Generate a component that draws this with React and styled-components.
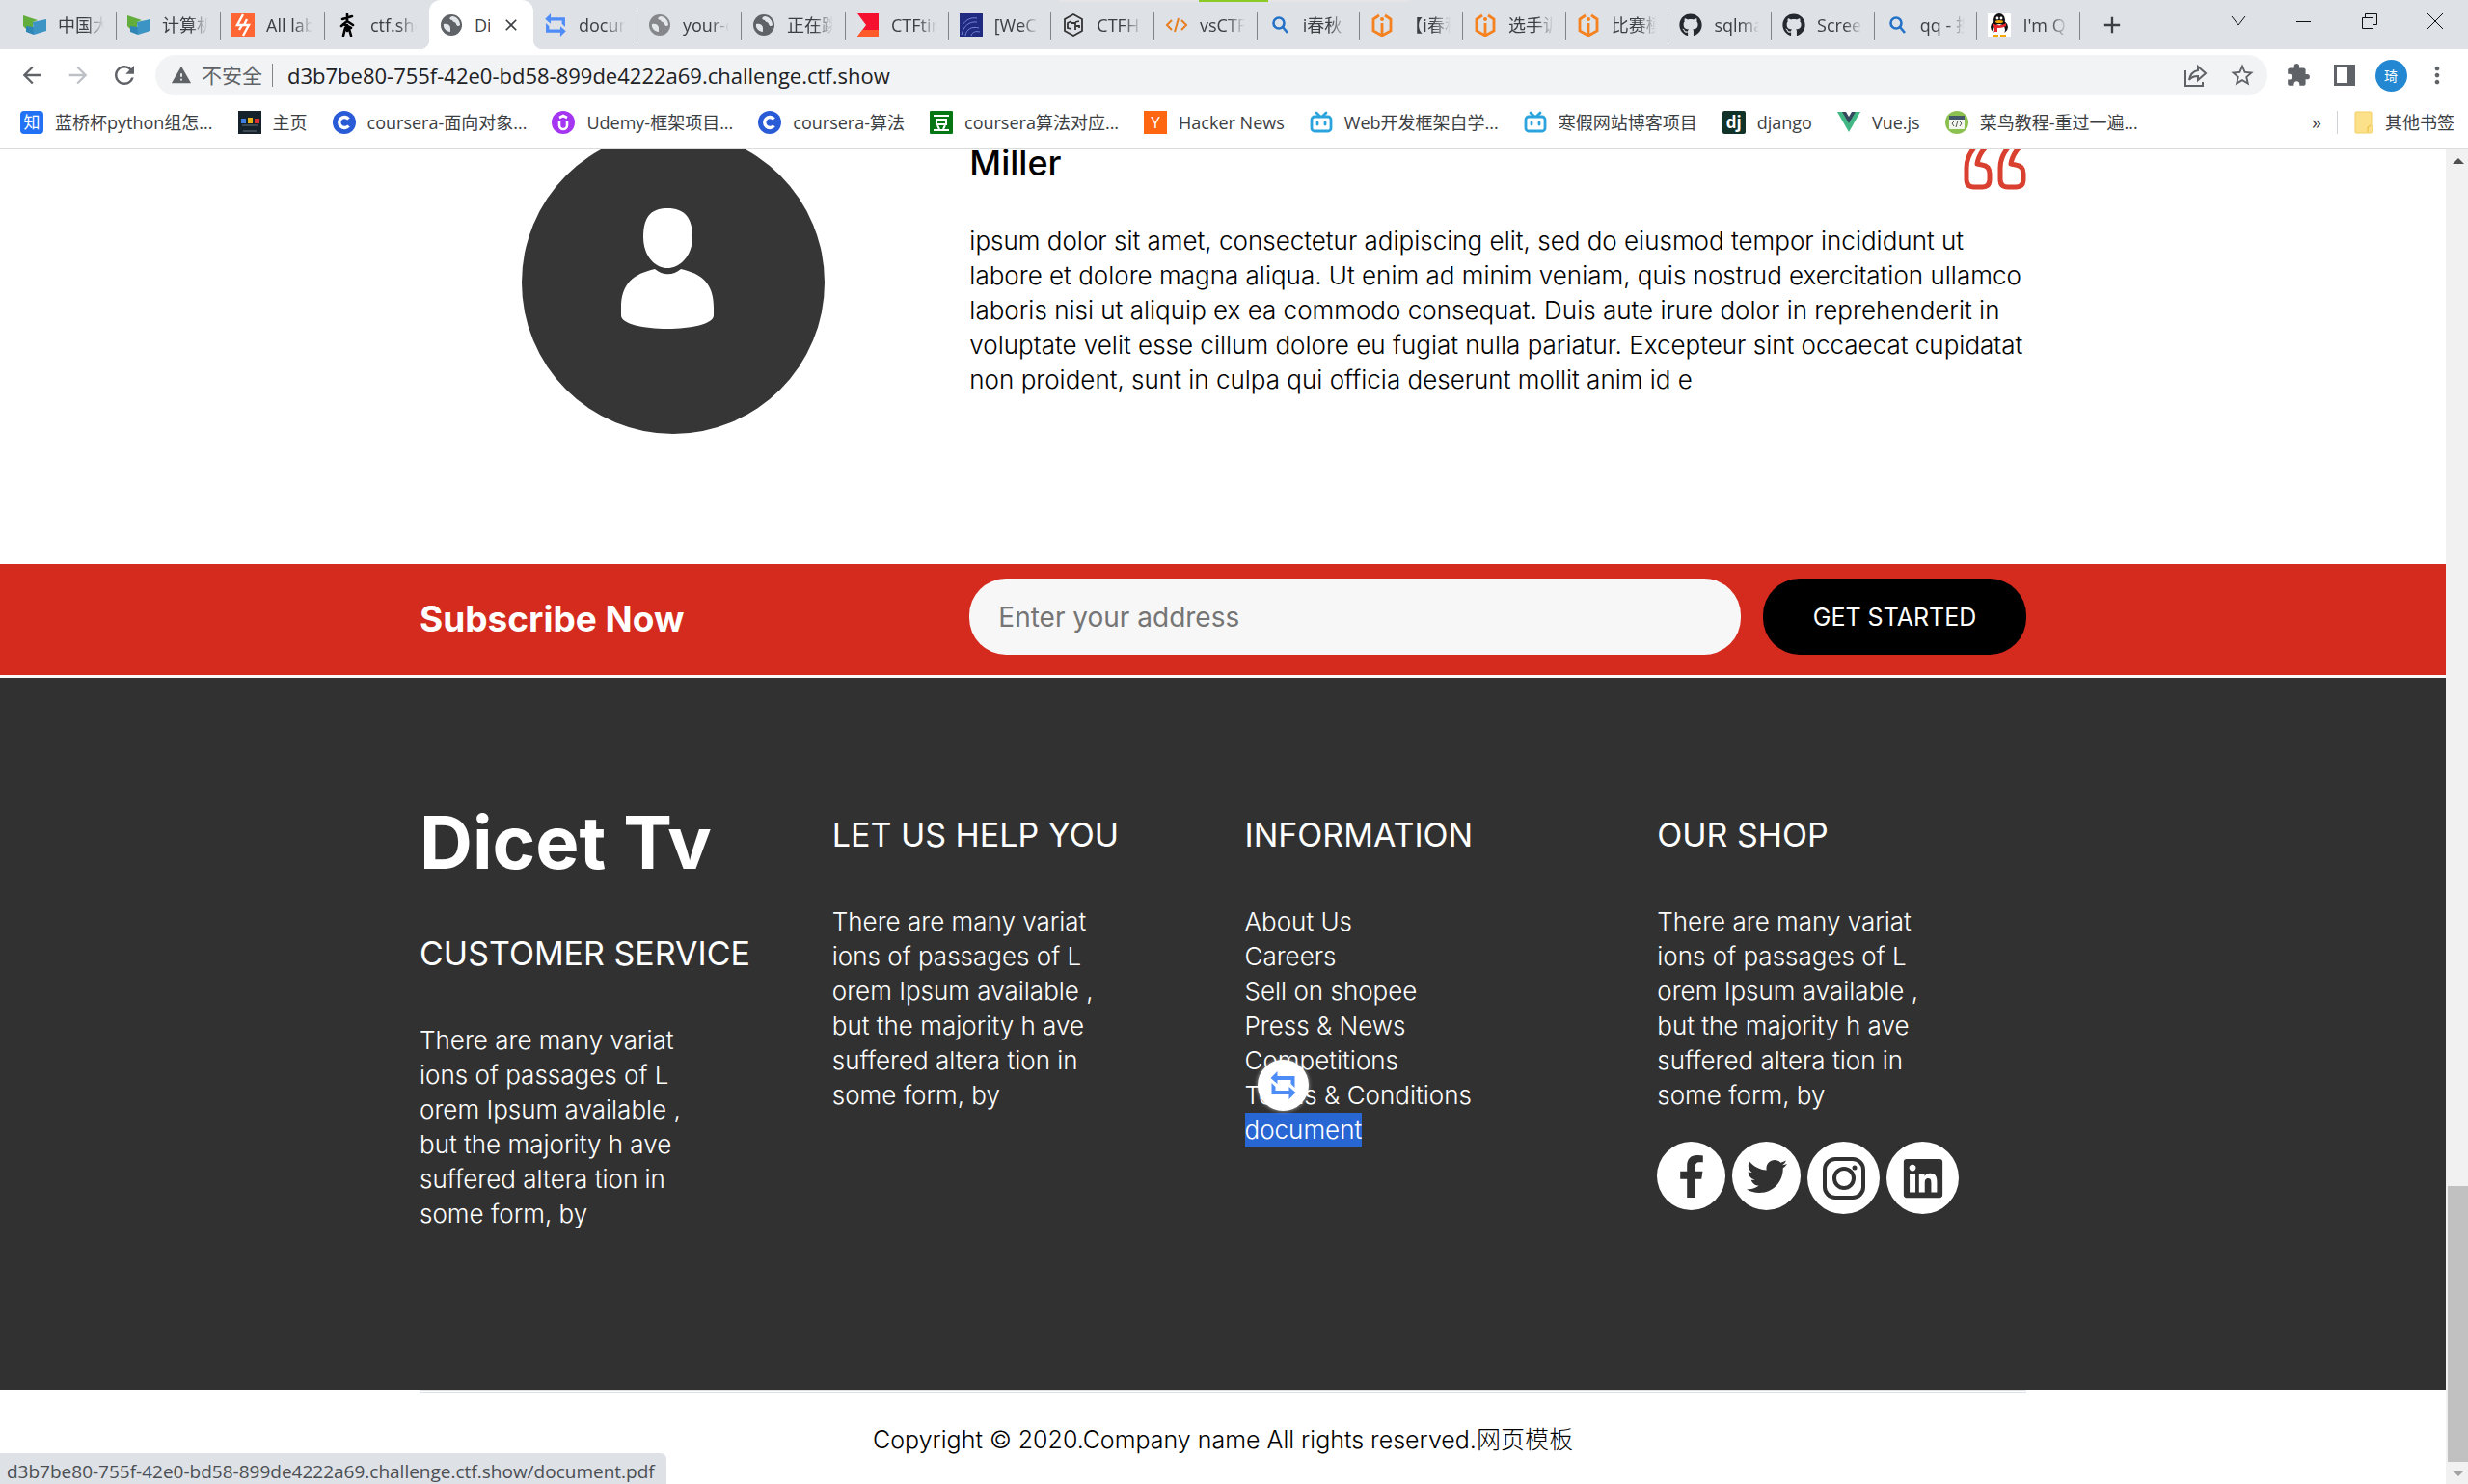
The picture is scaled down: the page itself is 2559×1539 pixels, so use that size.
import React from "react";
import styled, { createGlobalStyle, css } from "styled-components";
import {
  MdArrowBack,
  MdArrowForward,
  MdRefresh,
  MdWarning,
  MdStarBorder,
  MdExtension,
  MdMoreVert,
  MdAdd,
  MdClose,
} from "react-icons/md";
import { FaGithub, FaFacebookF, FaTwitter, FaLinkedin } from "react-icons/fa";

const uiFont = `"Open Sans", "Noto Sans CJK SC", sans-serif`;
const siteFont = `Inter, "Noto Sans CJK SC", sans-serif`;

const GlobalStyle = createGlobalStyle`
  *, *::before, *::after { box-sizing: border-box; }
  body { margin: 0; background: #fff; }
  h2, h3, p, ul { margin: 0; padding: 0; }
  ul { list-style: none; }
  a { color: inherit; text-decoration: none; }
  button { border: 0; padding: 0; background: none; font: inherit; color: inherit; }
  svg { display: block; flex: none; }
`;

/* ---------- browser frame ---------- */

const Browser = styled.div`
  display: flex;
  flex-direction: column;
  height: 100vh;
  overflow: hidden;
  font-family: ${uiFont};
  color: #3c4043;
`;

const TabStrip = styled.header`
  position: relative;
  display: flex;
  height: 51px;
  flex: none;
  padding-left: 13px;
  background: #dee1e6;
`;

const DragHandle = styled.div`
  position: absolute;
  top: 0;
  left: 50%;
  width: 363px;
  height: 2px;
  margin-left: -182px;
  background: linear-gradient(90deg, #e5e5e7 145px, #8ac926 145px 217px, #e5e5e7 217px);
`;

const TabList = styled.nav`
  display: flex;
  flex: 1;
  min-width: 0;
`;

const TabButton = styled.button`
  position: relative;
  display: flex;
  align-items: center;
  flex: 1 1 0;
  min-width: 0;
  gap: 12px;
  padding: 0 13px 0 11px;
  font-size: 18px;
  line-height: 24px;
  text-align: left;
  color: #3c4043;

  &:nth-child(-n + 8) {
    flex: 0 0 108px;
  }

  &::after {
    content: "";
    position: absolute;
    right: 0;
    top: 12px;
    width: 1px;
    height: 29px;
    background: ${(p) => (p.$bare ? "transparent" : "#808387")};
  }

  ${(p) =>
    p.$active &&
    css`
      background: #fff;
      border-radius: 12px 12px 0 0;

      &::before {
        content: "";
        position: absolute;
        left: -9px;
        right: -9px;
        bottom: 0;
        height: 9px;
        background:
          radial-gradient(circle at 0 0, transparent 9px, #fff 9px) left / 9px 9px no-repeat,
          radial-gradient(circle at 100% 0, transparent 9px, #fff 9px) right / 9px 9px no-repeat;
      }
    `}
`;

const TabLabel = styled.span`
  flex: 1;
  min-width: 0;
  overflow: hidden;
  white-space: nowrap;
  mask-image: ${(p) => (p.$solid ? "none" : "linear-gradient(90deg, #000 60%, transparent)")};
`;

const StripEnd = styled.div`
  display: flex;
  align-items: center;
  width: 402px;
  flex: none;
  color: #3c4043;
`;

const NewTab = styled.button`
  display: grid;
  place-items: center;
  width: 66px;
  height: 51px;
`;

const WindowControls = styled.div`
  display: flex;
  align-self: flex-start;
  margin-left: auto;
  color: #111;
`;

const WindowButton = styled.button`
  display: grid;
  place-items: center;
  width: 68px;
  height: 44px;
`;

const Toolbar = styled.div`
  display: flex;
  align-items: center;
  flex: none;
  height: 54px;
  padding: 0 8px 0 9px;
  color: #5f6368;
`;

const ToolButton = styled.button`
  display: grid;
  place-items: center;
  width: 48px;
  height: 42px;
  color: ${(p) => (p.$muted ? "#bdc1c6" : "#5f6368")};
`;

const AddressBar = styled.div`
  display: flex;
  align-items: center;
  flex: 1;
  height: 42px;
  margin: 0 8px;
  padding: 0 2px 0 16px;
  border-radius: 21px;
  background: #f1f3f4;
`;

const Security = styled.span`
  display: flex;
  align-items: center;
  gap: 10px;
  padding-right: 10px;
  border-right: 1px solid #80868b;
  font-size: 21px;
  line-height: 24px;
`;

const AddressInput = styled.input`
  flex: 1;
  min-width: 0;
  height: 36px;
  padding: 0 15px;
  border: 0;
  outline: 0;
  background: transparent;
  font-family: ${uiFont};
  font-size: 22px;
  color: #202124;
`;

const Profile = styled.span`
  display: grid;
  place-items: center;
  width: 33px;
  height: 33px;
  border-radius: 50%;
  background: #2388d1;
  color: #fff;
  font-size: 14px;
`;

const Bookmarks = styled.nav`
  display: flex;
  align-items: center;
  gap: 26px;
  flex: none;
  height: 50px;
  padding: 0 14px 4px 21px;
  border-bottom: 2px solid #dadcdc;
  font-size: 18px;
  line-height: 24px;
  white-space: nowrap;
`;

const Bookmark = styled.a`
  display: flex;
  align-items: center;
  gap: 12px;
`;

const Overflow = styled.button`
  margin-left: auto;
  margin-right: -10px;
  font-size: 20px;
  line-height: 24px;
`;

const OtherBookmarks = styled(Bookmark)`
  height: 24px;
  padding-left: 17px;
  border-left: 1px solid #d0d3d6;
`;

const Tile = styled.span`
  display: grid;
  place-items: center;
  width: 24px;
  height: 24px;
  flex: none;
  border-radius: ${(p) => p.$radius || "0"};
  background: ${(p) => p.$bg};
  color: #fff;
  font-size: 17px;
  font-weight: ${(p) => (p.$bold ? 700 : 400)};
  line-height: 24px;
`;

const Viewport = styled.div`
  display: flex;
  flex: 1;
  min-height: 0;
`;

const Page = styled.main`
  display: flex;
  flex-direction: column;
  justify-content: flex-end;
  flex: 1;
  min-width: 0;
  overflow: hidden;
  font-family: ${siteFont};
  color: #000;
`;

const Scrollbar = styled.div`
  display: flex;
  flex-direction: column;
  width: 23px;
  flex: none;
  padding-left: 2px;
  background: #f1f1f1;
`;

const ScrollArrow = styled.button`
  display: grid;
  place-items: center;
  height: 23px;
  flex: none;
  color: ${(p) => (p.$dim ? "#a3a3a3" : "#505050")};
`;

const ScrollSpace = styled.div`
  flex: 1052;
`;

const ScrollThumb = styled.div`
  flex: 286;
  background: #c1c1c1;
`;

const StatusBubble = styled.div`
  position: fixed;
  left: 0;
  bottom: 0;
  height: 32px;
  padding: 0 12px 0 7px;
  border-top-right-radius: 6px;
  background: #dee1e6;
  font-size: 19px;
  line-height: 38px;
  color: #4b4f54;
`;

/* ---------- web page ---------- */

const Container = styled.div`
  width: 100%;
  max-width: 1710px;
  margin: 0 auto;
  padding: 0 22px;
`;

const SplitRow = styled(Container)`
  display: grid;
  grid-template-columns: 525fr 1095fr;
  column-gap: 45px;
`;

const Testimonial = styled.section`
  flex: none;
  padding-bottom: 135px;
`;

const Portrait = styled.div`
  display: flex;
  justify-content: center;
`;

const Quote = styled.div`
  padding-top: 11px;
`;

const QuoteHead = styled.div`
  display: flex;
  justify-content: space-between;
  height: 50px;
  margin-bottom: 35px;
`;

const Name = styled.h3`
  font-size: 36px;
  font-weight: 500;
  line-height: 44px;
`;

const Copy = styled.p`
  font-size: 26px;
  font-weight: 300;
  line-height: 36px;
  white-space: pre-line;
`;

const Subscribe = styled.section`
  flex: none;
  padding: 15px 0 21px;
  border-bottom: 3px solid #f8f9fa;
  background: #d52b1e;
  background-clip: padding-box;
`;

const SubscribeTitle = styled.h3`
  padding-top: 20px;
  font-size: 37px;
  font-weight: 700;
  line-height: 44px;
  color: #fff;
`;

const SubscribeForm = styled.form`
  display: flex;
  gap: 23px;
`;

const EmailInput = styled.input`
  flex: 1;
  min-width: 0;
  height: 79px;
  padding: 0 30px;
  border: 0;
  border-radius: 38px;
  background: #f7f7f7;
  font-family: ${siteFont};
  font-size: 28px;
  &::placeholder { color: #757575; opacity: 1; }
`;

const SubmitButton = styled.button`
  width: 273px;
  height: 79px;
  border-radius: 38px;
  background: #000;
  color: #fff;
  font-size: 25px;
`;

const Footer = styled.footer`
  flex: none;
  padding: 130px 0 165px;
  background: #313131;
  color: #fff;
`;

const FooterGrid = styled(Container)`
  display: grid;
  grid-template-columns: repeat(4, 1fr);
  column-gap: 45px;
`;

const Column = styled.div`
  min-width: 0;
  padding-top: ${(p) => (p.$first ? "0" : "11px")};
`;

const Logo = styled.a`
  display: block;
  margin-bottom: 54px;
  font-size: 76px;
  font-weight: 700;
  line-height: 80px;
  white-space: nowrap;
`;

const FooterTitle = styled.h3`
  margin-bottom: 50px;
  font-size: 34px;
  font-weight: 400;
  line-height: 44px;
  white-space: nowrap;
`;

const LinkList = styled.ul`
  position: relative;
  font-size: 26px;
  font-weight: 300;
  line-height: 36px;
`;

const FooterLink = styled.a`
  display: inline-block;
  background: ${(p) => (p.$selected ? "#2866d4" : "transparent")};
`;

const FloatingTool = styled.li`
  position: absolute;
  left: 13px;
  top: 161px;
  display: grid;
  place-items: center;
  width: 53px;
  height: 53px;
  border-radius: 50%;
  background: #fff;
  box-shadow: 0 0 4px rgba(255, 255, 255, 0.6);
`;

const Socials = styled.div`
  display: flex;
  align-items: flex-start;
  gap: 7px;
  margin-top: 30px;
`;

const SocialLink = styled.a`
  display: grid;
  place-items: center;
  width: ${(p) => (p.$large ? "75px" : "71px")};
  height: ${(p) => (p.$large ? "75px" : "71px")};
  border-radius: 50%;
  background: #fff;
  color: #313131;
`;

const Copyright = styled.div`
  flex: none;
  padding-bottom: 28px;
`;

const CopyrightLine = styled.div`
  padding-top: 30px;
  border-top: 3px double #dee2e6;
  font-size: 25px;
  font-weight: 300;
  line-height: 36px;
  text-align: center;
`;

/* ---------- icons ---------- */

const BookIcon = () => (
  <svg width="24" height="24" viewBox="0 0 24 24">
    <path d="M0 2l15 5-5 2v10l-6-2-4-4z" fill="#62ad3b" />
    <path d="M3 13l8 1v8l-8-3z" fill="#2d86b5" />
    <path d="M10 9l14-3v12l-13 4z" fill="#3b94c4" />
  </svg>
);
const BoltIcon = () => (
  <svg width="24" height="24" viewBox="0 0 24 24">
    <rect width="24" height="24" fill="#ff6633" />
    <path d="M12 1L6 12h5l-3 5M12 23l6-11h-5l3-6" stroke="#fff" strokeWidth="2.4" fill="none" />
  </svg>
);
const FigureIcon = () => (
  <svg width="24" height="24" viewBox="0 0 24 24" fill="none" stroke="#000" strokeWidth="2.6" strokeLinecap="round">
    <path d="M12 1v7M7 6l10-3M12 8l-6 5M12 8l6 4M8 11l8 4M12 12v6M10 15l-2 8M14 16l2 7" />
  </svg>
);
const GlobeIcon = ({ color = "#5f6368" }) => (
  <svg width="24" height="24" viewBox="0 0 24 24">
    <circle cx="12" cy="12" r="11" fill={color} />
    <path d="M4 11c4-1 7 1 7 4v4c-4 0-8-4-7-8zM13 3c-4 1-3 4 0 4 1 3 3 1 4 4s3 2 4 1c0-5-4-9-8-9z" fill="#e4e7ea" />
  </svg>
);
const LoopIcon = ({ size = 24 }) => (
  <svg width={size} height={size} viewBox="0 0 26 29" fill="#4e8cf7">
    <path d="M0 7l7-7v5h18v12l-4-4V9H7v4z" />
    <path d="M26 22l-7 7v-5H1V12l4 4v4h14v-4z" />
  </svg>
);
const FlagIcon = () => (
  <svg width="24" height="24" viewBox="0 0 24 24">
    <path d="M1 0h22v24H1l9-12z" fill="#f5102f" />
    <path d="M6 17h17v7H1z" fill="#ff5a2a" />
  </svg>
);
const NightIcon = () => (
  <svg width="24" height="24" viewBox="0 0 24 24">
    <rect width="24" height="24" fill="#1f2a80" />
    <path d="M2 22c2-9 8-14 16-13M6 23c1-7 7-10 14-8M3 12c4-6 9-8 15-7M12 23c1-4 5-5 9-4" stroke="#7484d6" strokeWidth="1" fill="none" />
  </svg>
);
const HexIcon = () => (
  <svg width="24" height="24" viewBox="0 0 24 24" fill="none" stroke="#333" strokeWidth="1.8">
    <path d="M12 1l9 5v12l-9 5-9-5V6z" />
    <path d="M10 8l-4 2v5l4 1M10 10h4v7M14 9l4-1M15 13h3M18 12v3" />
  </svg>
);
const CodeIcon = () => (
  <svg width="24" height="24" viewBox="0 0 24 24" fill="none" stroke="#e67e22" strokeWidth="2">
    <path d="M7 7l-5 5 5 5M17 7l5 5-5 5M14 5l-4 14" />
  </svg>
);
const FindIcon = () => (
  <svg width="24" height="24" viewBox="0 0 24 24" fill="none" stroke="#2472c8" strokeWidth="2.6">
    <circle cx="11" cy="10" r="5.5" />
    <path d="M15 14l5 6" />
  </svg>
);
const ShieldIcon = () => (
  <svg width="24" height="24" viewBox="0 0 24 24" fill="none" stroke="#f5821f" strokeWidth="2.8">
    <path d="M9 2L3 6v12l9 5 9-5V6l-6-4M12 10v12" />
    <circle cx="12" cy="6" r="2" fill="#f5821f" stroke="none" />
  </svg>
);
const PenguinIcon = () => (
  <svg width="24" height="24" viewBox="0 0 24 24">
    <rect width="24" height="24" fill="#fff" />
    <ellipse cx="12" cy="14" rx="9" ry="7" fill="#111" />
    <ellipse cx="12" cy="7" rx="6" ry="7" fill="#111" />
    <ellipse cx="12" cy="17" rx="6" ry="6" fill="#fff" />
    <path d="M5 10c5 3 9 3 14 0v3c-4 2-7 2-9 2v4H7v-5l-2-1z" fill="#e5262b" />
    <ellipse cx="12" cy="8.5" rx="4" ry="1.5" fill="#f6a800" />
    <circle cx="10" cy="5" r="1.4" fill="#fff" />
    <circle cx="14" cy="5" r="1.4" fill="#fff" />
    <path d="M5 22h6v2H5zM13 22h6v2h-6z" fill="#f6a800" />
  </svg>
);
const PageIcon = () => (
  <svg width="24" height="24" viewBox="0 0 24 24">
    <rect width="24" height="24" fill="#15212b" />
    <rect x="3" y="8" width="5" height="5" fill="#3f7fe0" />
    <rect x="10" y="7" width="5" height="6" fill="#e8b21c" />
    <rect x="17" y="8" width="5" height="5" fill="#d8322c" />
    <path d="M4 15h16M5 21h14" stroke="#66707c" strokeWidth="1" />
  </svg>
);
const CIcon = () => (
  <svg width="24" height="24" viewBox="0 0 24 24">
    <circle cx="12" cy="12" r="12" fill="#2a5bd7" />
    <path d="M16.5 8.5a5.5 5.5 0 1 0 0 7" fill="none" stroke="#fff" strokeWidth="3.4" />
  </svg>
);
const UIcon = () => (
  <svg width="24" height="24" viewBox="0 0 24 24" fill="none" stroke="#fff" strokeWidth="2.6">
    <circle cx="12" cy="12" r="12" fill="#a435f0" stroke="none" />
    <path d="M8 10v5a4 4 0 0 0 8 0v-5M8 7l4-2 4 2" />
  </svg>
);
const BeanIcon = () => (
  <svg width="24" height="24" viewBox="0 0 24 24" fill="none" stroke="#fff" strokeWidth="2">
    <rect width="24" height="24" rx="1" fill="#077716" stroke="none" />
    <path d="M4 5h16M7 9h10v5H7zM8 15l2 4M16 15l-2 4M4 20h16" />
  </svg>
);
const TvIcon = () => (
  <svg width="24" height="24" viewBox="0 0 24 24" fill="none" stroke="#2ba4dd" strokeWidth="2.8" strokeLinecap="round">
    <rect x="2" y="6" width="20" height="15" rx="3" />
    <path d="M7 2l3 3M17 2l-3 3M8 12v2M16 12v2" />
  </svg>
);
const VueIcon = () => (
  <svg width="24" height="24" viewBox="0 0 24 24">
    <path d="M0 1h24L12 22z" fill="#41b883" />
    <path d="M5 1h14l-7 12z" fill="#34495e" />
    <path d="M9 1h6l-3 5z" fill="#fff" />
  </svg>
);
const RookieIcon = () => (
  <svg width="24" height="24" viewBox="0 0 24 24">
    <circle cx="12" cy="12" r="12" fill="#8cc152" />
    <rect x="4" y="5" width="16" height="14" rx="1" fill="#f2f6ec" />
    <rect x="4" y="5" width="16" height="4" fill="#43576b" />
    <path d="M9 11l-2 2 2 3M15 11l2 2-2 3M13 10l-2 7" stroke="#555" fill="none" />
  </svg>
);
const FolderIcon = () => (
  <svg width="20" height="24" viewBox="0 0 20 24">
    <path d="M2 1h15a1 1 0 0 1 1 1v13l1 2v4a2 2 0 0 1-2 2H2a1 1 0 0 1-1-1V2a1 1 0 0 1 1-1z" fill="#fde08a" stroke="#f3cf63" />
    <path d="M14 22v-5l3-2" stroke="#e8b93c" fill="none" />
  </svg>
);
const ShareIcon = () => (
  <svg width="26" height="26" viewBox="0 0 26 26" fill="none" stroke="#5f6368" strokeWidth="2">
    <path d="M2 8v16h18v-4M15 4l8 7-8 7v-4c-4 0-7 1-9 4 1-6 4-9 9-10z" />
  </svg>
);
const PanelIcon = () => (
  <svg width="22" height="22" viewBox="0 0 22 22">
    <path d="M0 0h22v22H0zM3 3v16h11V3z" fill="#5f6368" fillRule="evenodd" />
  </svg>
);
const ChevronIcon = () => (
  <svg width="16" height="12" viewBox="0 0 16 12" fill="none" stroke="#111">
    <path d="M1 1l7 9 7-9" />
  </svg>
);
const MinimizeIcon = () => (
  <svg width="16" height="16" viewBox="0 0 16 16" stroke="#111">
    <path d="M0 8.5h15" />
  </svg>
);
const RestoreIcon = () => (
  <svg width="16" height="16" viewBox="0 0 16 16" fill="none" stroke="#111">
    <path d="M.5 4.5h11v11H.5zM3.5 4V.5h12v11H12" />
  </svg>
);
const CrossIcon = () => (
  <svg width="16" height="16" viewBox="0 0 16 16" stroke="#111">
    <path d="M0 0l16 16M16 0L0 16" />
  </svg>
);
const TriangleIcon = ({ down }) => (
  <svg width="12" height="6" viewBox="0 0 12 6" fill="currentColor">
    <path d={down ? "M0 0h12L6 6z" : "M0 6h12L6 0z"} />
  </svg>
);
const PersonIcon = () => (
  <svg width="314" height="314" viewBox="0 0 314 314">
    <circle cx="157" cy="157" r="157" fill="#363636" />
    <g fill="#fff">
      <path d="M151 80c18 0 26 10 26 30 0 18-12 32-26 32s-25-14-25-32c0-20 7-30 25-30z" />
      <path d="M138 143c8 7 19 7 27 0 22 5 34 15 34 40v8c0 9-24 14-48 14s-48-5-48-14v-8c0-25 13-35 35-40z" />
    </g>
  </svg>
);
const QuoteIcon = () => (
  <svg width="65" height="50" viewBox="0 0 65 50" fill="none" stroke="#d9402f" strokeWidth="5" strokeLinejoin="round">
    <path d="M17 0C8 8 3 16 3 27v12q0 8 8 8h8q8 0 8-8v-6q0-8-8-9l-5-1q2-12 12-20" />
    <path d="M52 0C43 8 38 16 38 27v12q0 8 8 8h8q8 0 8-8v-6q0-8-8-9l-5-1q2-12 12-20" />
  </svg>
);
const CameraIcon = () => (
  <svg width="44" height="44" viewBox="0 0 44 44" fill="none" stroke="#313131" strokeWidth="4">
    <rect x="2" y="2" width="40" height="40" rx="11" />
    <circle cx="22" cy="22" r="10" />
    <circle cx="33" cy="11" r="2.5" fill="#313131" stroke="none" />
  </svg>
);

/* ---------- data ---------- */

const tabs = [
  { label: "中国大", icon: <BookIcon /> },
  { label: "计算机", icon: <BookIcon /> },
  { label: "All lab", icon: <BoltIcon /> },
  { label: "ctf.sho", icon: <FigureIcon />, bare: true },
  { label: "Di", icon: <GlobeIcon />, active: true, bare: true },
  { label: "docum", icon: <LoopIcon /> },
  { label: "your-d", icon: <GlobeIcon color="#85878a" /> },
  { label: "正在跳", icon: <GlobeIcon /> },
  { label: "CTFtim", icon: <FlagIcon /> },
  { label: "[WeC", icon: <NightIcon /> },
  { label: "CTFH", icon: <HexIcon /> },
  { label: "vsCTF", icon: <CodeIcon /> },
  { label: "i春秋", icon: <FindIcon /> },
  { label: "【i春秋", icon: <ShieldIcon /> },
  { label: "选手训", icon: <ShieldIcon /> },
  { label: "比赛模", icon: <ShieldIcon /> },
  { label: "sqlma", icon: <FaGithub size={24} color="#24292f" /> },
  { label: "Scree", icon: <FaGithub size={24} color="#24292f" /> },
  { label: "qq - 搜", icon: <FindIcon /> },
  { label: "I'm Q", icon: <PenguinIcon /> },
];

const bookmarks = [
  { label: "蓝桥杯python组怎...", icon: <Tile $bg="#2372f5" $radius="4px">知</Tile> },
  { label: "主页", icon: <PageIcon /> },
  { label: "coursera-面向对象...", icon: <CIcon /> },
  { label: "Udemy-框架项目...", icon: <UIcon /> },
  { label: "coursera-算法", icon: <CIcon /> },
  { label: "coursera算法对应...", icon: <BeanIcon /> },
  { label: "Hacker News", icon: <Tile $bg="#ff6611">Y</Tile> },
  { label: "Web开发框架自学...", icon: <TvIcon /> },
  { label: "寒假网站博客项目", icon: <TvIcon /> },
  { label: "django", icon: <Tile $bg="#113228" $radius="2px" $bold>dj</Tile> },
  { label: "Vue.js", icon: <VueIcon /> },
  { label: "菜鸟教程-重过一遍...", icon: <RookieIcon /> },
];

const infoLinks = [
  "About Us",
  "Careers",
  "Sell on shopee",
  "Press & News",
  "Competitions",
  "Terms & Conditions",
  "document",
];

const blurb = `There are many variat
ions of passages of L
orem Ipsum available ,
but the majority h ave
suffered altera tion in
some form, by`;

const quote = `ipsum dolor sit amet, consectetur adipiscing elit, sed do eiusmod tempor incididunt ut
labore et dolore magna aliqua. Ut enim ad minim veniam, quis nostrud exercitation ullamco
laboris nisi ut aliquip ex ea commodo consequat. Duis aute irure dolor in reprehenderit in
voluptate velit esse cillum dolore eu fugiat nulla pariatur. Excepteur sint occaecat cupidatat
non proident, sunt in culpa qui officia deserunt mollit anim id e`;

export default function App() {
  return (
    <Browser>
      <GlobalStyle />
      <TabStrip>
        <TabList>
          {tabs.map((tab, i) => (
            <TabButton key={i} $active={tab.active} $bare={tab.bare}>
              {tab.icon}
              <TabLabel $solid={tab.active}>{tab.label}</TabLabel>
              {tab.active && <MdClose size={20} color="#3c4043" />}
            </TabButton>
          ))}
        </TabList>
        <StripEnd>
          <NewTab aria-label="New tab"><MdAdd size={28} /></NewTab>
          <WindowControls>
            <WindowButton aria-label="Search tabs"><ChevronIcon /></WindowButton>
            <WindowButton aria-label="Minimize"><MinimizeIcon /></WindowButton>
            <WindowButton aria-label="Restore"><RestoreIcon /></WindowButton>
            <WindowButton aria-label="Close"><CrossIcon /></WindowButton>
          </WindowControls>
        </StripEnd>
        <DragHandle />
      </TabStrip>

      <Toolbar>
        <ToolButton aria-label="Back"><MdArrowBack size={28} /></ToolButton>
        <ToolButton aria-label="Forward" $muted><MdArrowForward size={28} /></ToolButton>
        <ToolButton aria-label="Reload"><MdRefresh size={30} /></ToolButton>
        <AddressBar>
          <Security><MdWarning size={22} />不安全</Security>
          <AddressInput
            aria-label="Address"
            defaultValue="d3b7be80-755f-42e0-bd58-899de4222a69.challenge.ctf.show"
          />
          <ToolButton aria-label="Share"><ShareIcon /></ToolButton>
          <ToolButton aria-label="Bookmark this page"><MdStarBorder size={28} /></ToolButton>
        </AddressBar>
        <ToolButton aria-label="Extensions"><MdExtension size={26} /></ToolButton>
        <ToolButton aria-label="Side panel"><PanelIcon /></ToolButton>
        <ToolButton aria-label="Profile"><Profile>琦</Profile></ToolButton>
        <ToolButton aria-label="Menu"><MdMoreVert size={28} /></ToolButton>
      </Toolbar>

      <Bookmarks>
        {bookmarks.map((b, i) => (
          <Bookmark key={i} href="#">{b.icon}{b.label}</Bookmark>
        ))}
        <Overflow aria-label="More bookmarks">»</Overflow>
        <OtherBookmarks href="#"><FolderIcon />其他书签</OtherBookmarks>
      </Bookmarks>

      <Viewport>
        <Page>
          <Testimonial>
            <SplitRow>
              <Portrait><PersonIcon /></Portrait>
              <Quote>
                <QuoteHead>
                  <Name>Miller</Name>
                  <QuoteIcon />
                </QuoteHead>
                <Copy>{quote}</Copy>
              </Quote>
            </SplitRow>
          </Testimonial>

          <Subscribe>
            <SplitRow>
              <SubscribeTitle>Subscribe Now</SubscribeTitle>
              <SubscribeForm onSubmit={(e) => e.preventDefault()}>
                <EmailInput aria-label="Enter your address" placeholder="Enter your address" />
                <SubmitButton>GET STARTED</SubmitButton>
              </SubscribeForm>
            </SplitRow>
          </Subscribe>

          <Footer>
            <FooterGrid>
              <Column $first>
                <Logo href="#">Dicet Tv</Logo>
                <FooterTitle>CUSTOMER SERVICE</FooterTitle>
                <Copy>{blurb}</Copy>
              </Column>
              <Column>
                <FooterTitle>LET US HELP YOU</FooterTitle>
                <Copy>{blurb}</Copy>
              </Column>
              <Column>
                <FooterTitle>INFORMATION</FooterTitle>
                <LinkList>
                  {infoLinks.map((label) => (
                    <li key={label}>
                      <FooterLink href="#" $selected={label === "document"}>{label}</FooterLink>
                    </li>
                  ))}
                  <FloatingTool><LoopIcon size={29} /></FloatingTool>
                </LinkList>
              </Column>
              <Column>
                <FooterTitle>OUR SHOP</FooterTitle>
                <Copy>{blurb}</Copy>
                <Socials>
                  <SocialLink href="#" aria-label="Facebook"><FaFacebookF size={44} /></SocialLink>
                  <SocialLink href="#" aria-label="Twitter"><FaTwitter size={42} /></SocialLink>
                  <SocialLink href="#" aria-label="Instagram" $large><CameraIcon /></SocialLink>
                  <SocialLink href="#" aria-label="LinkedIn" $large><FaLinkedin size={46} /></SocialLink>
                </Socials>
              </Column>
            </FooterGrid>
          </Footer>

          <Copyright>
            <Container>
              <CopyrightLine>
                Copyright © 2020.Company name All rights reserved.<a href="#">网页模板</a>
              </CopyrightLine>
            </Container>
          </Copyright>
        </Page>
        <Scrollbar>
          <ScrollArrow aria-label="Scroll up"><TriangleIcon /></ScrollArrow>
          <ScrollSpace />
          <ScrollThumb />
          <ScrollArrow aria-label="Scroll down" $dim><TriangleIcon down /></ScrollArrow>
        </Scrollbar>
      </Viewport>
      <StatusBubble>d3b7be80-755f-42e0-bd58-899de4222a69.challenge.ctf.show/document.pdf</StatusBubble>
    </Browser>
  );
}
